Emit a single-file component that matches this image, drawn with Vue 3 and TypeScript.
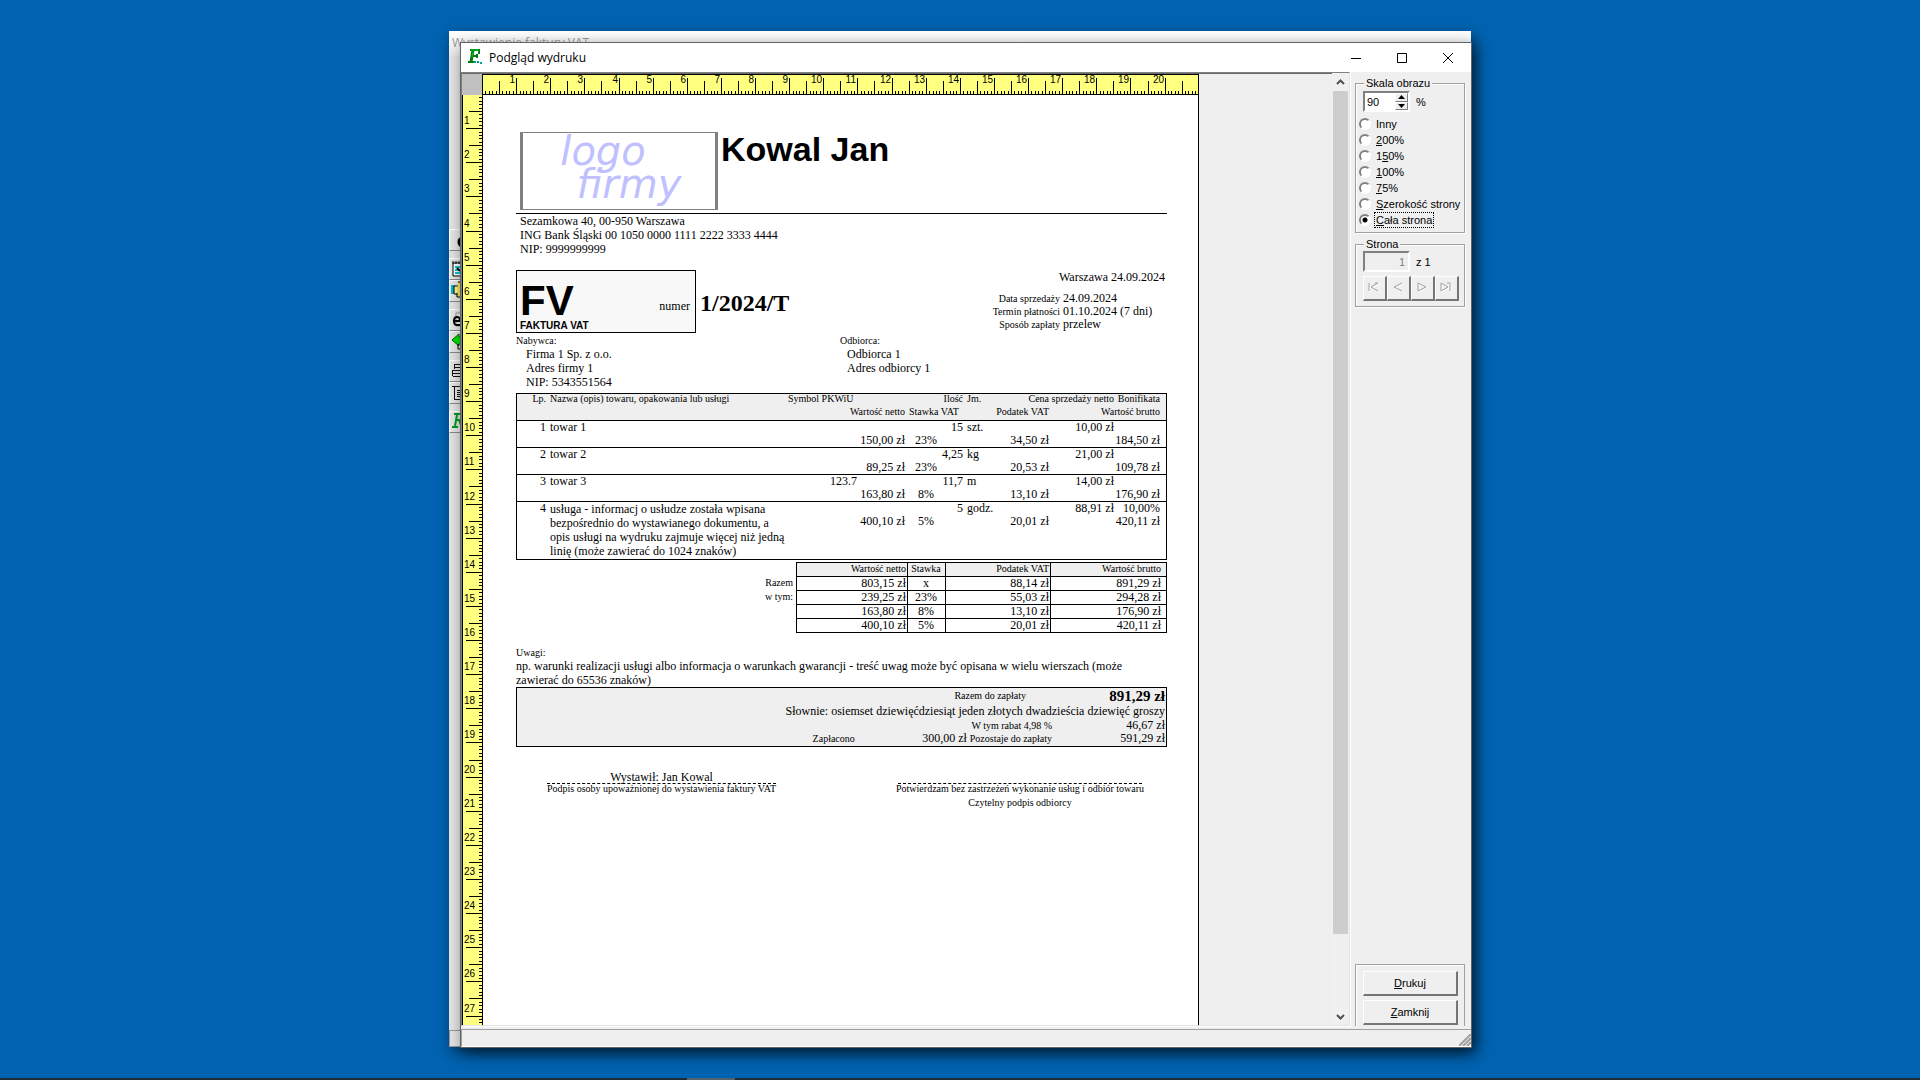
<script setup lang="ts">
import { ref } from 'vue'

interface Tick { pos: number; size: number; label: string }

const CM = 34.13

function ticks(count: number, shift: number): Tick[] {
  return Array.from({ length: count }, (_, k) => {
    const i = k + 1
    return {
      pos: Math.round((i * CM) / 10) + shift,
      size: i % 10 === 0 ? 16 : i % 5 === 0 ? 13 : 3,
      label: i % 10 === 0 ? String(i / 10) : '',
    }
  })
}

const across = ticks(209, 0)
const down = ticks(290, -1)

interface Item {
  lp: number; name: string[]; symbol: string; qty: string; unit: string; price: string; discount: string
  net: string; rate: string; tax: string; gross: string
}

const items: Item[] = [
  { lp: 1, name: ['towar 1'], symbol: '', qty: '15', unit: 'szt.', price: '10,00 zł', discount: '', net: '150,00 zł', rate: '23%', tax: '34,50 zł', gross: '184,50 zł' },
  { lp: 2, name: ['towar 2'], symbol: '', qty: '4,25', unit: 'kg', price: '21,00 zł', discount: '', net: '89,25 zł', rate: '23%', tax: '20,53 zł', gross: '109,78 zł' },
  { lp: 3, name: ['towar 3'], symbol: '123.7', qty: '11,7', unit: 'm', price: '14,00 zł', discount: '', net: '163,80 zł', rate: '8%', tax: '13,10 zł', gross: '176,90 zł' },
  {
    lp: 4,
    name: [
      'usługa - informacj o usłudze została wpisana',
      'bezpośrednio do wystawianego dokumentu, a',
      'opis usługi na wydruku zajmuje więcej niż jedną',
      'linię (może zawierać do 1024 znaków)',
    ],
    symbol: '', qty: '5', unit: 'godz.', price: '88,91 zł', discount: '10,00%', net: '400,10 zł', rate: '5%', tax: '20,01 zł', gross: '420,11 zł',
  },
]

const totals = [
  { label: 'Razem', net: '803,15 zł', rate: 'x', tax: '88,14 zł', gross: '891,29 zł' },
  { label: 'w tym:', net: '239,25 zł', rate: '23%', tax: '55,03 zł', gross: '294,28 zł' },
  { label: '', net: '163,80 zł', rate: '8%', tax: '13,10 zł', gross: '176,90 zł' },
  { label: '', net: '400,10 zł', rate: '5%', tax: '20,01 zł', gross: '420,11 zł' },
]

const scales = [
  { id: 'other', before: 'Inny', key: '', after: '' },
  { id: '200', before: '', key: '2', after: '00%' },
  { id: '150', before: '1', key: '5', after: '0%' },
  { id: '100', before: '', key: '1', after: '00%' },
  { id: '75', before: '', key: '7', after: '5%' },
  { id: 'width', before: '', key: 'S', after: 'zerokość strony' },
  { id: 'page', before: '', key: 'C', after: 'ała strona' },
]
const scale = ref('page')
const zoom = ref('90')
const page = ref('1')

const pager = [
  { name: 'Pierwsza strona', d: 'M1 1V9M10 1L3 5L10 9M10 1H7' },
  { name: 'Poprzednia strona', d: 'M10 1L2 5L10 9' },
  { name: 'Następna strona', d: 'M2 9V1L10 5L2 9' },
  { name: 'Ostatnia strona', d: 'M1 9V1L8 5L1 9M10 1V9M7 1H10' },
]
</script>

<template>
  <div class="desktop">
    <section class="window back">
      <header class="back-title">Wystawienie faktury VAT</header>
      <nav class="tools">
        <button type="button" aria-label="Podgląd"><svg width="20" height="20"><path d="M14 8q-5 0-5 4t5 4" fill="none" stroke="#000" stroke-width="3" /></svg></button>
        <button type="button" aria-label="Notatnik" class="gap"><svg width="20" height="20"><path d="M3 4H16V17H3Z" fill="#fff" stroke="#000" /><path d="M3 2v3M6 2v3M9 2v3M12 2v3" stroke="#000" /><path d="M5 8h7M5 11h7M5 14h7" stroke="#00c8d8" stroke-width="2" /><path d="M7 9l3 3" stroke="#000" stroke-width="2" /></svg></button>
        <button type="button" aria-label="Kopiuj"><svg width="20" height="20"><path d="M2 4v9M4 4v9" stroke="#00b8d0" stroke-width="2" /><path d="M4 5h6v8H4Z" fill="#fff59a" stroke="#000" /><path d="M8 1h8v15H7v-4" fill="#f6e25a" stroke="#000" /></svg></button>
        <button type="button" aria-label="Wyślij" class="gap"><svg width="20" height="20"><path d="M6 3h10v13H6Z" fill="#eee" stroke="#999" /><path d="M3 11h7q0-4-3-4t-3 4 3 4h4" fill="none" stroke="#000" stroke-width="2" /></svg></button>
        <button type="button" aria-label="Wstecz"><svg width="20" height="20"><path d="M2 8L9 2V5H16V12H9V14Z" fill="#00e000" stroke="#006000" /><path d="M8 12v5h6" fill="none" stroke="#000" /></svg></button>
        <button type="button" aria-label="Drukuj" class="gap"><svg width="20" height="20"><path d="M4 3.500h12M4.500 4V8M5 6.500h11M2 9.500h14M2.500 10v5M3 12.500h12M3 15.500h13" fill="none" stroke="#111" /></svg></button>
        <button type="button" aria-label="Lista"><svg width="20" height="20"><path d="M2 3.500h14M4.500 4v13M5 16.500h11M7 7.500h8M7 9.500h8M7 11.500h8M7 13.500h8" fill="none" stroke="#111" /></svg></button>
        <button type="button" aria-label="Faktura" class="gap"><svg width="20" height="20"><path d="M4 2H12M7 3L5 14M2 15h6M6 8h6M9 8l3 8" fill="none" stroke="#009a20" stroke-width="2" /></svg></button>
      </nav>
      <div class="back-status"></div>
    </section>

    <main class="window front">
      <header class="titlebar">
        <svg class="app-icon" width="16" height="16" viewBox="0 0 16 16">
          <path d="M3 1H13M1 13H8M5 7H10M10 5V9M12 1V5" fill="none" stroke="#007d12" stroke-width="2" />
          <path d="M6 1L4 13" fill="none" stroke="#007d12" stroke-width="3" />
          <path d="M4 1h8M6 3L5 8" fill="none" stroke="#00c81e" />
          <path d="M8 12v2M10 13h2M13 14h2" stroke="#00a0a0" stroke-width="2" />
        </svg>
        <span class="caption">Podgląd wydruku</span>
        <button type="button" class="sys" aria-label="Minimalizuj"><svg width="12" height="12"><path d="M1 6.500H11" stroke="#000" /></svg></button>
        <button type="button" class="sys" aria-label="Maksymalizuj"><svg width="12" height="12"><path d="M1.500 1.500H10.500V10.500H1.500Z" fill="none" stroke="#000" /></svg></button>
        <button type="button" class="sys" aria-label="Zamknij okno"><svg width="12" height="12"><path d="M1 1L11 11M11 1L1 11" stroke="#000" /></svg></button>
      </header>

      <div class="client">
        <div class="viewer">
          <div class="canvas">
            <div class="ruler-row">
              <div class="corner"></div>
              <svg class="ruler-top" height="21">
                <g shape-rendering="crispEdges">
                  <rect v-for="t in across" :key="t.pos" :x="t.pos - 1" :y="19 - t.size" width="1" :height="t.size" />
                </g>
                <text v-for="t in across.filter(a => a.label)" :key="t.label" :x="t.pos - 2" y="8" text-anchor="end">{{ t.label }}</text>
              </svg>
            </div>
            <div class="page-row">
              <svg class="ruler-left" width="21">
                <g shape-rendering="crispEdges">
                  <rect v-for="t in down" :key="t.pos" :x="19 - t.size" :y="t.pos" :width="t.size" height="1" />
                </g>
                <text v-for="t in down.filter(a => a.label)" :key="t.label" x="1" :y="t.pos - 4">{{ t.label }}</text>
              </svg>

              <article class="paper">
                <header class="seller">
                  <svg class="logo" width="198" height="78">
                    <text x="80" y="32" text-anchor="middle">logo</text>
                    <text x="106" y="65" text-anchor="middle">firmy</text>
                  </svg>
                  <h1>Kowal Jan</h1>
                </header>
                <address>
                  <p>Sezamkowa 40, 00-950 Warszawa</p>
                  <p>ING Bank Śląski 00 1050 0000 1111 2222 3333 4444</p>
                  <p>NIP: 9999999999</p>
                </address>

                <section class="heading">
                  <div class="kind">
                    <div class="kind-name">
                      <strong class="code">FV</strong>
                      <strong class="full">FAKTURA VAT</strong>
                    </div>
                    <span>numer</span>
                  </div>
                  <h2>1/2024/T</h2>
                  <div class="dates">
                    <p>Warszawa 24.09.2024</p>
                    <dl>
                      <dt>Data sprzedaży</dt><dd>24.09.2024</dd>
                      <dt>Termin płatności</dt><dd>01.10.2024 (7 dni)</dd>
                      <dt>Sposób zapłaty</dt><dd>przelew</dd>
                    </dl>
                  </div>
                </section>

                <section class="parties">
                  <div class="buyer">
                    <h3>Nabywca:</h3>
                    <p>Firma 1 Sp. z o.o.</p>
                    <p>Adres firmy 1</p>
                    <p>NIP: 5343551564</p>
                  </div>
                  <div class="receiver">
                    <h3>Odbiorca:</h3>
                    <p>Odbiorca 1</p>
                    <p>Adres odbiorcy 1</p>
                  </div>
                </section>

                <table class="items">
                  <colgroup>
                    <col class="w31"><col class="w239"><col class="w72"><col class="w48"><col class="w58">
                    <col class="w55"><col class="w31"><col class="w65"><col class="w50">
                  </colgroup>
                  <thead>
                    <tr>
                      <th class="r">Lp.</th><th>Nazwa (opis) towaru, opakowania lub usługi</th><th class="sym">Symbol PKWiU</th>
                      <th colspan="2" class="r">Ilość</th><th class="l">Jm.</th><th colspan="2" class="r">Cena sprzedaży netto</th><th class="r last">Bonifikata</th>
                    </tr>
                    <tr>
                      <th colspan="2"></th><th colspan="2" class="r">Wartość netto</th><th class="l">Stawka VAT</th>
                      <th colspan="2" class="r">Podatek VAT</th><th colspan="2" class="r last">Wartość brutto</th>
                    </tr>
                  </thead>
                  <tbody v-for="it in items" :key="it.lp">
                    <tr class="first">
                      <td class="r">{{ it.lp }}</td>
                      <td :rowspan="it.name.length > 2 ? 3 : 2"><div v-for="line in it.name" :key="line">{{ line }}</div></td>
                      <td class="r">{{ it.symbol }}</td>
                      <td colspan="2" class="r">{{ it.qty }}</td>
                      <td class="l">{{ it.unit }}</td>
                      <td colspan="2" class="r">{{ it.price }}</td>
                      <td class="r last">{{ it.discount }}</td>
                    </tr>
                    <tr>
                      <td></td>
                      <td colspan="2" class="r">{{ it.net }}</td>
                      <td class="rate">{{ it.rate }}</td>
                      <td colspan="2" class="r">{{ it.tax }}</td>
                      <td colspan="2" class="r last">{{ it.gross }}</td>
                    </tr>
                    <tr v-if="it.name.length > 2" class="rest"><td></td><td colspan="7"></td></tr>
                  </tbody>
                </table>

                <table class="totals">
                  <colgroup><col class="w280"><col class="w111"><col class="w38"><col class="w105"><col class="w117"></colgroup>
                  <thead>
                    <tr><td class="label"></td><th>Wartość netto</th><th class="c">Stawka</th><th>Podatek VAT</th><th class="last">Wartość brutto</th></tr>
                  </thead>
                  <tbody>
                    <tr v-for="t in totals" :key="t.net + t.rate">
                      <th class="label">{{ t.label }}</th><td>{{ t.net }}</td><td class="c">{{ t.rate }}</td><td>{{ t.tax }}</td><td class="last">{{ t.gross }}</td>
                    </tr>
                  </tbody>
                </table>

                <section class="notes">
                  <h3>Uwagi:</h3>
                  <p>np. warunki realizacji usługi albo informacja o warunkach gwarancji - treść uwag może być opisana w wielu wierszach (może</p>
                  <p>zawierać do 65536 znaków)</p>
                </section>

                <section class="due">
                  <div class="line total"><span class="tag">Razem do zapłaty</span><strong>891,29 zł</strong></div>
                  <div class="line words"><span>Słownie: osiemset dziewięćdziesiąt jeden złotych dwadzieścia dziewięć groszy</span></div>
                  <div class="line"><span class="tag">W tym rabat 4,98 %</span><span class="sum">46,67 zł</span></div>
                  <div class="line">
                    <span class="tag">Zapłacono</span><span class="paid">300,00 zł</span>
                    <span class="tag">Pozostaje do zapłaty</span><span class="sum">591,29 zł</span>
                  </div>
                </section>

                <section class="signatures">
                  <div class="sign issuer">
                    <p class="who">Wystawił: Jan Kowal</p>
                    <small>Podpis osoby upoważnionej do wystawienia faktury VAT</small>
                  </div>
                  <div class="sign taker">
                    <p class="who"></p>
                    <small>Potwierdzam bez zastrzeżeń wykonanie usług i odbiór towaru</small>
                    <small>Czytelny podpis odbiorcy</small>
                  </div>
                </section>
              </article>
            </div>
          </div>
          <div class="scrollbar">
            <button type="button" aria-label="W górę"><svg width="9" height="9"><path d="M1 6L4.500 2.500L8 6" fill="none" stroke="#505050" stroke-width="2" /></svg></button>
            <div class="track"><div class="thumb"></div></div>
            <button type="button" aria-label="W dół"><svg width="9" height="9"><path d="M1 3L4.500 6.500L8 3" fill="none" stroke="#505050" stroke-width="2" /></svg></button>
          </div>
        </div>

        <aside class="side">
          <fieldset class="scale">
            <legend>Skala obrazu</legend>
            <div class="field">
              <div class="spin">
                <input v-model="zoom" type="text" aria-label="Skala obrazu w procentach">
                <div class="arrows">
                  <button type="button" aria-label="Więcej"><svg width="7" height="4"><path d="M0 4L3.500 0L7 4Z" /></svg></button>
                  <button type="button" aria-label="Mniej"><svg width="7" height="4"><path d="M0 0L3.500 4L7 0Z" /></svg></button>
                </div>
              </div>
              <span>%</span>
            </div>
            <label v-for="s in scales" :key="s.id" class="radio">
              <input v-model="scale" type="radio" name="scale" :value="s.id">
              <span :class="{ focus: scale === s.id }">{{ s.before }}<u v-if="s.key">{{ s.key }}</u>{{ s.after }}</span>
            </label>
          </fieldset>
          <fieldset class="pages">
            <legend>Strona</legend>
            <div class="field">
              <input v-model="page" class="page-no" type="text" disabled aria-label="Numer strony">
              <span>z 1</span>
            </div>
            <div class="pager">
              <button v-for="p in pager" :key="p.name" type="button" disabled :aria-label="p.name">
                <svg width="13" height="12"><path :d="p.d" transform="translate(1 1)" stroke="#fff" /><path :d="p.d" stroke="#a0a0a0" /></svg>
              </button>
            </div>
          </fieldset>
          <div class="actions">
            <button type="button"><span><u>D</u>rukuj</span></button>
            <button type="button"><span><u>Z</u>amknij</span></button>
          </div>
        </aside>
      </div>

      <footer class="status">
        <svg width="12" height="12"><path d="M0 12L12 0M4 12L12 4M8 12L12 8" stroke="#a0a0a0" stroke-width="2" /></svg>
      </footer>
    </main>

    <div class="taskbar"><div class="task"></div></div>
  </div>
</template>

<style>
body { margin: 0; }
</style>

<style scoped>
* { box-sizing: border-box; }
p, h1, h2, h3, dl, dd { margin: 0; }
button { padding: 0; font: inherit; color: inherit; }
svg { display: block; }

.desktop {
  position: relative;
  height: 100vh;
  overflow: hidden;
  background: #0063b1;
  font-family: "Liberation Sans", Arial, sans-serif;
  font-size: 11px;
  color: #000;
}
.window {
  position: absolute;
  display: flex;
  flex-direction: column;
  box-shadow: 3px 5px 14px rgba(0, 0, 0, 0.5);
}
.back {
  inset: 31px 449px 33px 449px;
  background: #e4e4e4;
}
.back-title {
  height: 25px;
  padding-left: 3px;
  background: linear-gradient(#fff, #e8e8e8);
  font: 12px/24px "Open Sans", "Noto Sans", sans-serif;
  color: #999;
}
.tools { flex: 1; padding-top: 173px; }
.tools button {
  display: block;
  width: 22px;
  height: 22px;
  border: 1px solid;
  border-color: #fff #888 #888 #fff;
  background: #e6e6e6;
}
.tools .gap { margin-top: 7px; }
.back-status { height: 17px; border: 1px solid #999; }

.front {
  inset: 42px 448px 32px 460px;
  border: 1px solid #5f6468;
  background: #efefef;
}
.titlebar {
  display: flex;
  align-items: center;
  height: 29px;
  padding-left: 6px;
  background: #fff;
}
.app-icon { margin: 0 6px 2px 0; }
.caption { flex: 1; font: 12px/28px "Open Sans", "Noto Sans", sans-serif; }
.sys {
  display: flex;
  align-items: center;
  justify-content: center;
  width: 46px;
  height: 28px;
  border: 0;
  background: none;
}

.client { display: flex; flex: 1; min-height: 0; }
.viewer {
  display: flex;
  flex: 1;
  min-width: 0;
  border: 1px solid;
  border-color: #808080 #e3e3e3 #e3e3e3 #808080;
  box-shadow: 1px 1px 0 #fff;
}
.canvas {
  display: flex;
  flex: 1;
  flex-direction: column;
  min-width: 0;
  border-top: 1px solid #696969;
}
.ruler-row, .page-row { display: flex; }
.page-row { flex: 1; min-height: 0; overflow: hidden; }
.corner { width: 20px; background: #c0c0c0; }
.ruler-top {
  width: 717px;
  border: 1px solid #000;
  background: #ffff80;
  font-size: 10px;
}
.ruler-left {
  flex: none;
  height: 100%;
  border: solid #000;
  border-width: 0 1px;
  background: #ffff80;
  font-size: 10px;
}

.paper {
  flex: 0 0 716px;
  padding: 37px 31px 0 33px;
  border-right: 1px solid #000;
  background: #fff;
  font: 12px/14px "Liberation Serif", "Times New Roman", serif;
  white-space: nowrap;
}
.seller {
  display: flex;
  gap: 3px;
  height: 82px;
  padding-left: 4px;
  border-bottom: 1px solid #000;
}
.logo {
  border: solid #808080;
  border-width: 1px 3px;
}
.logo text {
  font: italic 40px "DejaVu Sans", sans-serif;
  fill: #c0c0ff;
}
h1 { font: bold 34px/34px "Liberation Sans", Arial, sans-serif; }
address { padding-left: 4px; font-style: normal; }

.heading { display: flex; margin-top: 14px; }
.kind {
  display: flex;
  align-items: center;
  justify-content: space-between;
  width: 180px;
  height: 63px;
  padding: 0 5px 0 3px;
  border: 1px solid #000;
  background: #f8f8f8;
}
.kind > span { padding-top: 8px; }
.kind-name {
  display: flex;
  flex-direction: column;
  font-family: "Liberation Sans", Arial, sans-serif;
}
.code { padding-top: 10px; font-size: 42px; line-height: 38px; }
.full { font-size: 10px; line-height: 12px; }
h2 { flex: 1; padding: 20px 0 0 4px; font-size: 24px; line-height: 26px; }
.dates p { text-align: right; padding-right: 2px; }
.dates dl {
  display: grid;
  grid-template-columns: auto 104px;
  column-gap: 3px;
  margin-top: 8px;
  line-height: 13px;
}
dt, h3, .tag, small { font-size: 10px; font-weight: normal; }
dt { text-align: right; }
h3 { line-height: 13px; }

.parties { display: flex; margin-top: 1px; height: 58px; }
.buyer { width: 324px; }
.buyer p { padding-left: 10px; }
.receiver p { padding-left: 7px; }

table { width: 651px; border-spacing: 0; table-layout: fixed; }
th, td { padding: 0; vertical-align: top; text-align: left; }
th { font-size: 10px; font-weight: normal; }
.w31 { width: 31px; }
.w239 { width: 239px; }
.w72 { width: 72px; }
.w48 { width: 48px; }
.w58 { width: 58px; }
.w55 { width: 55px; }
.w65 { width: 65px; }
.w50 { width: 50px; }
.w280 { width: 280px; }
.w111 { width: 111px; }
.w38 { width: 38px; }
.w105 { width: 105px; }
.w117 { width: 117px; }

.items { margin-top: 1px; border: 1px solid #000; }
.items tr { height: 13px; line-height: 13px; }
.items thead { background: #efefef; }
.items thead tr { line-height: 10px; }
.items .first { height: 14px; }
.items .first td { border-top: 1px solid #000; }
.items .first div { line-height: 14px; }
.items .first div:only-child { line-height: 13px; }
.items .rest { height: 31px; }
.items th:nth-child(2), .items td:nth-child(2) { padding-left: 2px; }
.items .r { padding-right: 2px; text-align: right; }
.items .l { padding-left: 2px; }
.items .sym { padding-left: 1px; }
.items .last { padding-right: 6px; }
.items .rate { padding-right: 20px; text-align: center; }

.totals { margin-top: 2px; line-height: 13px; }
.totals th, .totals td {
  height: 14px;
  padding-right: 1px;
  border: solid #000;
  border-width: 1px 0 0 1px;
  text-align: right;
}
.totals thead th { height: 13px; background: #efefef; line-height: 11px; }
.totals .c { text-align: center; }
.totals .last { padding-right: 5px; border-right-width: 1px; }
.totals tr:last-child td { border-bottom-width: 1px; }
.totals thead tr:last-child td { border-bottom-width: 0; }
.totals .label { padding-right: 3px; border: 0; }

.notes { margin-top: 13px; }
.due {
  height: 60px;
  border: 1px solid #000;
  background: #efefef;
}
.line { display: flex; justify-content: flex-end; line-height: 13px; padding-right: 1px; }
.total { height: 16px; line-height: 16px; }
.words { line-height: 15px; }
.due strong { width: 139px; font-size: 15px; text-align: right; }
.sum { width: 113px; text-align: right; }
.paid { width: 112px; margin-right: 3px; text-align: right; }

.signatures {
  display: flex;
  justify-content: space-between;
  margin-top: 23px;
  padding: 0 25px 0 31px;
}
.sign { display: flex; flex-direction: column; align-items: center; }
.issuer { width: 229px; }
.taker { width: 244px; }
.who {
  align-self: stretch;
  height: 14px;
  border-bottom: 1px dashed #000;
  text-align: center;
}
.sign small { line-height: 18px; }
.sign small:nth-child(2) { line-height: 10px; }

.scrollbar {
  display: flex;
  flex-direction: column;
  width: 17px;
  background: #f0f0f0;
}
.scrollbar button {
  display: flex;
  align-items: center;
  justify-content: center;
  height: 18px;
  border: 0;
  background: none;
}
.track { flex: 1; }
.thumb { height: 92%; margin: 0 1px; background: #cdcdcd; }

.side {
  display: flex;
  flex-direction: column;
  width: 121px;
  padding: 4px 6px 0 4px;
  border-left: 1px solid #fff;
}
fieldset {
  min-width: 0;
  margin: 0;
  padding: 0 0 0 7px;
  border: 1px solid #a0a0a0;
  box-shadow: 1px 1px 0 #fff, inset 1px 1px 0 #fff;
}
legend { margin-left: 1px; padding: 0 2px; background: #efefef; line-height: 14px; }
.scale { height: 157px; padding-top: 1px; }
.pages { height: 70px; margin-top: 4px; }
.field { display: flex; align-items: center; gap: 6px; height: 21px; }
.spin, .page-no {
  display: flex;
  width: 47px;
  height: 21px;
  border: 2px solid;
  border-color: #808080 #fff #fff #808080;
  background: #fff;
}
.spin input { width: 30px; padding: 0 2px; border: 0; font: inherit; line-height: 16px; }
.page-no { padding: 0 3px; background: #efefef; font: inherit; color: #808080; text-align: right; }
.arrows { display: flex; flex-direction: column; width: 13px; }
.arrows button {
  display: flex;
  flex: 1;
  align-items: center;
  justify-content: center;
  border: 1px solid;
  border-color: #fff #808080 #808080 #fff;
  background: #efefef;
}
.radio { display: flex; align-items: center; gap: 4px; height: 16px; margin-left: -4px; }
.field + .radio { margin-top: 4px; }
.radio input {
  appearance: none;
  width: 12px;
  height: 12px;
  margin: 0;
  border: 2px solid;
  border-color: #808080 #fff #fff #808080;
  border-radius: 50%;
  background: #fff;
}
.radio input:checked { background: radial-gradient(circle, #000 2px, #fff 3px); }
.radio span { padding: 0 1px; line-height: 14px; white-space: nowrap; }
.radio .focus { outline: 1px dotted #000; }
.pager { display: flex; margin-top: 4px; }
.pager button, .actions button {
  display: flex;
  align-items: center;
  justify-content: center;
  height: 25px;
  border: solid;
  border-width: 1px 2px 2px 1px;
  border-color: #fff #757575 #757575 #fff;
  background: #efefef;
}
.pager button { width: 24px; }
.pager path { fill: none; }
.actions {
  display: flex;
  flex-direction: column;
  gap: 4px;
  margin-top: auto;
  padding: 6px 6px 1px 7px;
  border: 1px solid #a0a0a0;
  border-bottom: 0;
  box-shadow: inset 1px 1px 0 #fff;
}

.status {
  display: flex;
  align-items: flex-end;
  justify-content: flex-end;
  height: 18px;
  margin-top: 3px;
  border: solid;
  border-width: 1px 0 1px 1px;
  border-color: #a0a0a0 #fff #fff #a0a0a0;
}

.taskbar {
  position: absolute;
  right: 0;
  bottom: 0;
  left: 0;
  height: 2px;
  padding-left: 687px;
  background: #1c2b36;
}
.task { width: 48px; height: 2px; background: #56626b; }
</style>
